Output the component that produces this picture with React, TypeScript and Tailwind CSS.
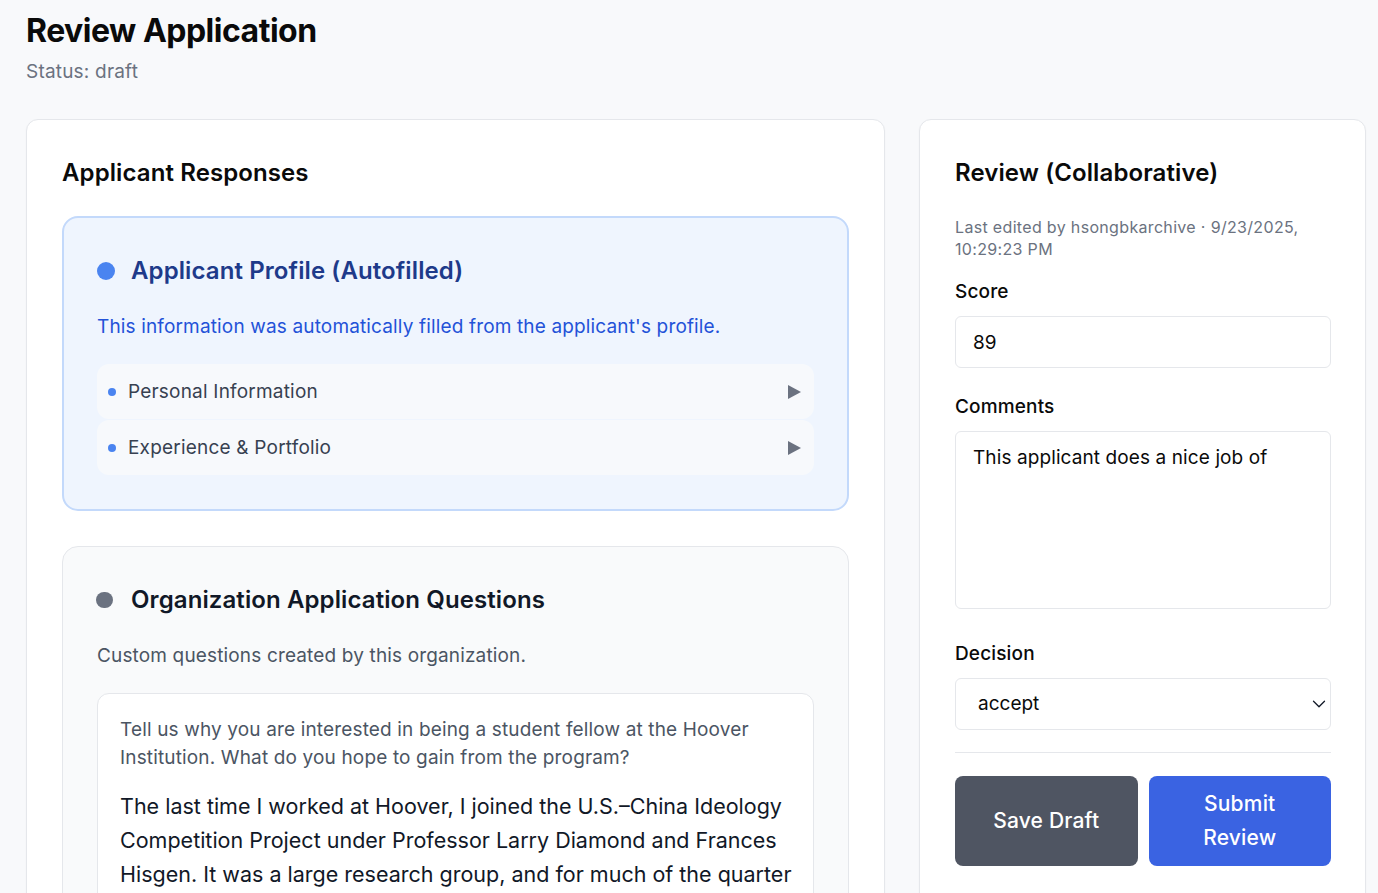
import { ChevronDown } from 'lucide-react';

const profileRows = ['Personal Information', 'Experience & Portfolio'];

function Triangle() {
  return (
    <svg width="15" height="16" viewBox="0 0 15 16" className="shrink-0">
      <polygon points="1,1 14,8 1,15" fill="#6b7280" />
    </svg>
  );
}

export default function App() {
  return (
    <div
      className="min-h-screen bg-[#f8f9fb] pl-[26px] pr-[12px] pt-[11px]"
      style={{ fontFamily: 'Inter, "Noto Sans", sans-serif' }}
    >
      <h1 className="text-[32px] leading-[40px] font-bold text-[#0a0a0a] tracking-[-0.5px]">Review Application</h1>
      <p className="mt-[7px] text-[19px] leading-[28px] tracking-[0.2px] text-[#6b7280]">Status: draft</p>

      <div className="mt-[33px] flex items-start gap-[34px]">
        {/* left column */}
        <section className="w-[859px] shrink-0 rounded-xl border border-[#e5e7eb] bg-white px-[35px] pt-[37px] pb-10 shadow-[0_1px_2px_rgba(0,0,0,0.04)]">
          <h2 className="text-[24px] leading-[32px] font-semibold tracking-[0.1px] text-[#0a0a0a]">Applicant Responses</h2>

          <div className="mt-[27px] rounded-2xl border-2 border-[#c3d9fb] bg-[#eff5fe] px-[33px] pt-[37px] pb-[34px]">
            <div className="flex items-center gap-4">
              <span className="h-[18px] w-[18px] rounded-full bg-[#4a84f0]" />
              <h3 className="text-[24px] leading-[32px] font-semibold tracking-[0.1px] text-[#1e3a8a]">Applicant Profile (Autofilled)</h3>
            </div>
            <p className="mt-[26px] text-[19px] leading-[28px] tracking-[0.15px] text-[#2352d8]">
              This information was automatically filled from the applicant's profile.
            </p>
            <div className="mt-[23px] flex flex-col gap-px">
              {profileRows.map(row => (
                <div key={row} className="flex h-[55px] items-center rounded-xl bg-[#f7f9fc] pl-[11px] pr-[12px]">
                  <span className="h-2 w-2 rounded-full bg-[#4a84f0]" />
                  <span className="ml-3 flex-1 text-[19px] leading-[28px] tracking-[0.2px] text-[#374151]">{row}</span>
                  <Triangle />
                </div>
              ))}
            </div>
          </div>

          <div className="mt-[35px] rounded-2xl border border-[#e5e7eb] bg-[#f9fafb] px-[34px] pt-[37px] pb-8">
            <div className="flex items-center gap-[18px]">
              <span className="-ml-px h-[16px] w-[17px] rounded-full bg-[#6b7280]" />
              <h3 className="text-[24px] leading-[32px] font-semibold tracking-[0.1px] text-[#111827]">Organization Application Questions</h3>
            </div>
            <p className="mt-[26px] text-[19px] leading-[28px] tracking-[0.15px] text-[#4b5563]">Custom questions created by this organization.</p>

            <div className="mt-[23px] rounded-xl border border-[#e5e7eb] bg-white pl-[22px] pr-[14px] pt-[22px] pb-6">
              <p className="text-[19px] leading-[28px] tracking-[0.15px] text-[#4b5563]">
                Tell us why you are interested in being a student fellow at the Hoover Institution. What do you hope to gain from the program?
              </p>
              <p className="mt-[17px] text-[21.5px] leading-[34px] text-[#111827]">
                The last time I worked at Hoover, I joined the U.S.–China Ideology Competition Project under Professor Larry Diamond and Frances Hisgen. It was a large research group, and for much of the quarter I worked alongside other students on the project's reading lists and briefs.
              </p>
            </div>
          </div>
        </section>

        {/* right column */}
        <aside className="w-[447px] shrink-0 rounded-xl border border-[#e5e7eb] bg-white pl-[35px] pr-[34px] pt-[37px] pb-10 shadow-[0_1px_2px_rgba(0,0,0,0.04)]">
          <h2 className="text-[24px] leading-[32px] font-semibold tracking-[0.1px] text-[#0a0a0a]">Review (Collaborative)</h2>
          <p className="mt-[27px] text-[16px] leading-[22px] tracking-[0.33px] text-[#6b7280]">
            Last edited by hsongbkarchive · 9/23/2025, 10:29:23 PM
          </p>

          <label className="mt-[18px] block text-[19px] leading-[28px] font-medium tracking-[0.15px] text-[#0a0a0a]">Score</label>
          <input
            readOnly
            value="89"
            className="mt-[10px] block h-[52px] w-full rounded-md border border-[#e5e7eb] bg-white px-[17px] text-[19px] text-[#0a0a0a] outline-none"
          />

          <label className="mt-[25px] block text-[19px] leading-[28px] font-medium tracking-[0.15px] text-[#0a0a0a]">Comments</label>
          <textarea
            readOnly
            value="This applicant does a nice job of"
            className="mt-[10px] block h-[178px] w-full resize-none rounded-md border border-[#e5e7eb] bg-white px-[17px] py-[12px] text-[19px] leading-[28px] tracking-[0.1px] text-[#0a0a0a] outline-none"
          />

          <label className="mt-[31px] block text-[19px] leading-[28px] font-medium tracking-[0.15px] text-[#0a0a0a]">Decision</label>
          <div className="relative mt-[10px]">
            <select
              defaultValue="accept"
              className="block h-[52px] w-full appearance-none rounded-md border border-[#e5e7eb] bg-white pl-[22px] pr-10 text-[19px] text-[#0a0a0a] outline-none"
            >
              <option value="accept">accept</option>
              <option value="reject">reject</option>
              <option value="waitlist">waitlist</option>
            </select>
            <ChevronDown
              size={22}
              strokeWidth={1.4}
              className="pointer-events-none absolute right-px top-1/2 -translate-y-1/2 text-[#111827]"
            />
          </div>

          <div className="mt-[22px] border-t border-[#e5e7eb]" />

          <div className="mt-[23px] flex gap-[11px]">
            <button className="flex h-[90px] flex-1 items-center justify-center rounded-lg bg-[#4f5562] px-7 text-[21px] leading-[34px] font-medium tracking-[0.2px] text-white">
              Save Draft
            </button>
            <button className="flex h-[90px] flex-1 items-center justify-center rounded-lg bg-[#3a63e2] px-7 text-[21px] leading-[34px] font-medium tracking-[0.2px] text-white">
              Submit Review
            </button>
          </div>
        </aside>
      </div>
    </div>
  );
}
